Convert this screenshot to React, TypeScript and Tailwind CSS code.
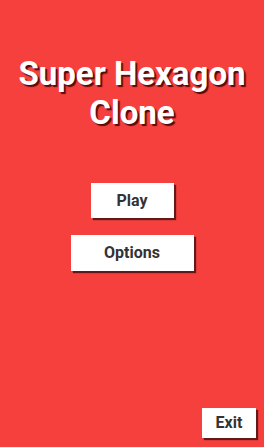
export default function App() {
  return (
    <div
      className="relative flex h-[447px] w-[264px] flex-col items-center bg-[#f6403d]"
      style={{ fontFamily: 'Roboto, "Liberation Sans", sans-serif' }}
    >
      <h1 className="mt-[54px] text-center text-[33px] font-bold leading-[39px] text-white [text-shadow:2px_2px_1px_rgba(60,0,0,0.85)]">
        Super Hexagon
        <br />
        Clone
      </h1>

      <button className="mt-[51px] h-[35px] w-[83px] bg-white text-[16px] font-bold text-[#333] shadow-[2px_2px_1px_rgba(0,0,0,0.6)]">
        Play
      </button>
      <button className="mt-[17px] h-[36px] w-[123px] bg-white text-[16px] font-bold text-[#333] shadow-[2px_2px_1px_rgba(0,0,0,0.6)]">
        Options
      </button>

      <div className="mt-auto mb-[9px] flex w-full justify-end pr-[8px]">
        <button className="h-[30px] w-[54px] bg-white text-[16px] font-bold text-[#333] shadow-[2px_2px_1px_rgba(0,0,0,0.6)]">
          Exit
        </button>
      </div>
    </div>
  );
}
